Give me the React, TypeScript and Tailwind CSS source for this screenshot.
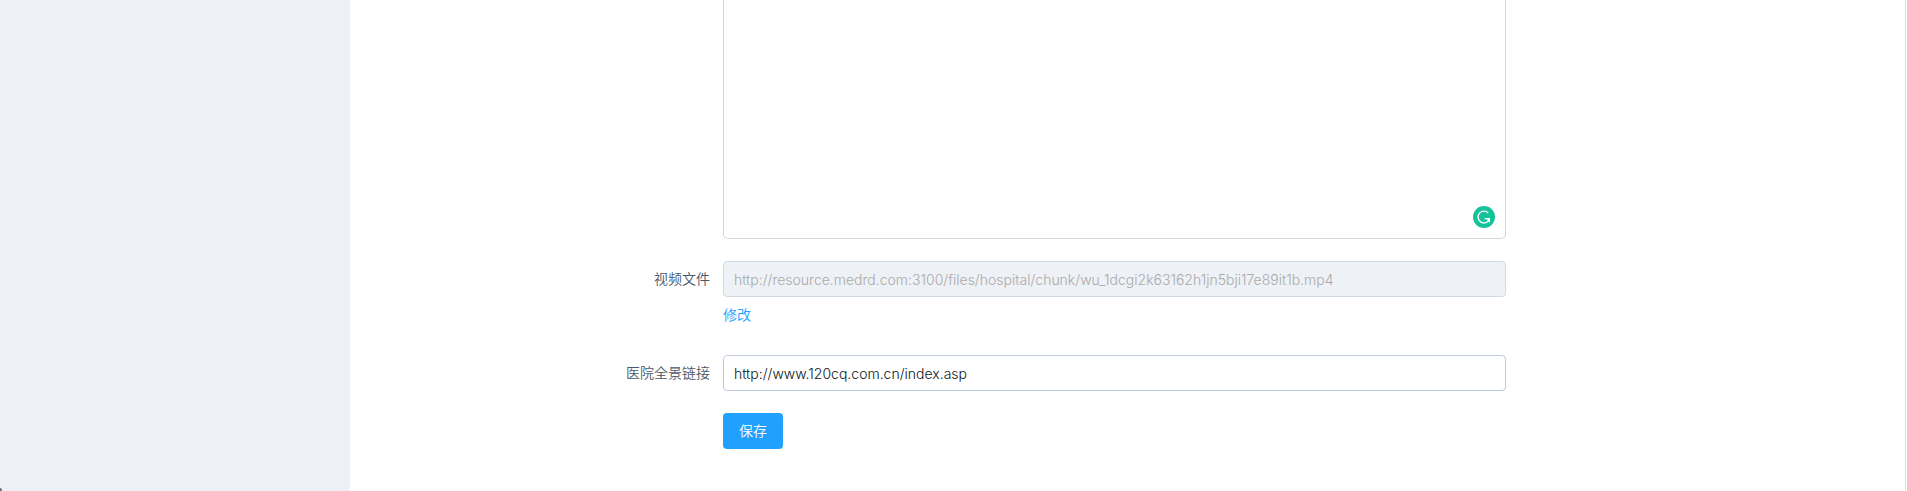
import { useState, type ReactNode } from 'react';

function FormRow({ label, htmlFor, children }: { label?: string; htmlFor?: string; children: ReactNode }) {
  return (
    <div className="grid grid-cols-[373fr_783fr_399fr]">
      <div className="pr-[13px] pt-[11px] text-right leading-[14px] text-[#48576a]">
        {label && <label htmlFor={htmlFor}>{label}</label>}
      </div>
      <div className="min-w-0">{children}</div>
    </div>
  );
}

function AssistantBadge() {
  return (
    <svg className="absolute bottom-[11px] right-[11px] size-[22px]" viewBox="0 0 22 22" fill="none" aria-hidden="true">
      <circle cx="11" cy="11" r="11" fill="#15c39a" />
      <path d="M15.2 6.9A5.9 5.9 0 1 0 14.2 16" stroke="#fff" strokeWidth="1.4" />
      <path d="M11.6 12.6h4.6q-.2 1.9-2 3.4" stroke="#fff" strokeWidth="1.3" />
      <path d="M13 12h4v5z" fill="#fff" />
    </svg>
  );
}

export default function App() {
  const [link, setLink] = useState('http://www.120cq.com.cn/index.asp');
  return (
    <div className="flex min-h-screen bg-white text-sm font-[350] [font-family:Inter,'Noto_Sans_CJK_SC',sans-serif]">
      <aside className="relative w-[350px] shrink-0 bg-[#edf1f6]">
        <span className="absolute bottom-0 left-0 h-[3px] w-0.5 rounded-tr-full bg-[#77706b]" />
      </aside>
      <main className="mr-px min-w-0 flex-1 border-r border-[#e2e2e2]">
        <form className="flex flex-col gap-[22px]" onSubmit={(e) => e.preventDefault()}>
          <FormRow>
            <div className="relative">
              <textarea
                aria-label="内容"
                className="block h-[239px] w-full resize-none rounded-b-[5px] border border-t-0 border-[#d4d6d9] px-2.5 outline-none"
              />
              <AssistantBadge />
            </div>
          </FormRow>
          <FormRow label="视频文件" htmlFor="video">
            <input
              id="video"
              disabled
              value="http://resource.medrd.com:3100/files/hospital/chunk/wu_1dcgi2k63162h1jn5bji17e89it1b.mp4"
              className="block h-9 w-full rounded border border-[#d1dbe5] bg-[#eef1f6] px-2.5 font-light text-[#aaa]"
            />
            <div className="h-9 leading-9">
              <a href="#video" className="text-[#20a0ff]">修改</a>
            </div>
          </FormRow>
          <FormRow label="医院全景链接" htmlFor="panorama">
            <input
              id="panorama"
              value={link}
              onChange={(e) => setLink(e.target.value)}
              className="block h-9 w-full rounded border border-[#bfcbd9] bg-white px-2.5 font-light text-[#0c1622] outline-none"
            />
          </FormRow>
          <FormRow>
            <button type="submit" className="block h-9 rounded bg-[#20a0ff] px-4 text-white">
              保存
            </button>
          </FormRow>
        </form>
      </main>
    </div>
  );
}
